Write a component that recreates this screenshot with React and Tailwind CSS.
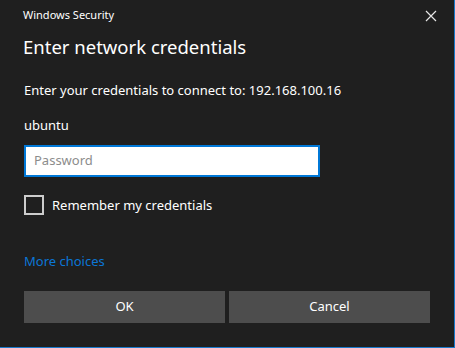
import React from 'react';

const font = { fontFamily: '"Noto Sans", "Open Sans", sans-serif' };

const App = () => {
  return (
    <div
      className="w-[455px] h-[348px] bg-[#1f1f1f] border-r border-b border-[#1979ca] text-white flex flex-col"
      style={font}
    >
      {/* title bar */}
      <div className="flex items-start justify-between h-[30px] pl-[23px] pr-[17px] pt-[6px]">
        <span className="text-[11px] leading-[18px]">Windows Security</span>
        <svg width="12" height="12" viewBox="0 0 12 12" className="mt-[4px]">
          <path d="M1 1 L11 11 M11 1 L1 11" stroke="#e6e6e6" strokeWidth="1.2" fill="none" />
        </svg>
      </div>

      <div className="px-[24px] flex flex-col">
        <h1 className="text-[18.5px] leading-[28px] mt-[3px] ml-[-1px]">Enter network credentials</h1>
        <p className="text-[13px] leading-[20px] mt-[19px]">
          Enter your credentials to connect to: 192.168.100.16
        </p>
        <p className="text-[13px] leading-[20px] mt-[15px]">ubuntu</p>
        <div className="mt-[10px] w-[296px] h-[32px] bg-white border-2 border-[#0078d7] flex items-center px-[8px]">
          <span className="text-[13px] text-[#8c8c8c]">Password</span>
        </div>
        <label className="mt-[18px] flex items-center gap-[8px]">
          <span className="w-[20px] h-[20px] border-2 border-[#cccccc]" />
          <span className="text-[13px] leading-[20px]">Remember my credentials</span>
        </label>
        <a className="mt-[36px] text-[13px] leading-[20px] text-[#0b76d6]">More choices</a>
        <div className="mt-[20px] flex gap-[4px]">
          <button className="w-[201px] h-[32px] bg-[#4d4d4d] text-[13px] text-white">OK</button>
          <button className="w-[201px] h-[32px] bg-[#4d4d4d] text-[13px] text-white">Cancel</button>
        </div>
      </div>
    </div>
  );
};

export default App;
